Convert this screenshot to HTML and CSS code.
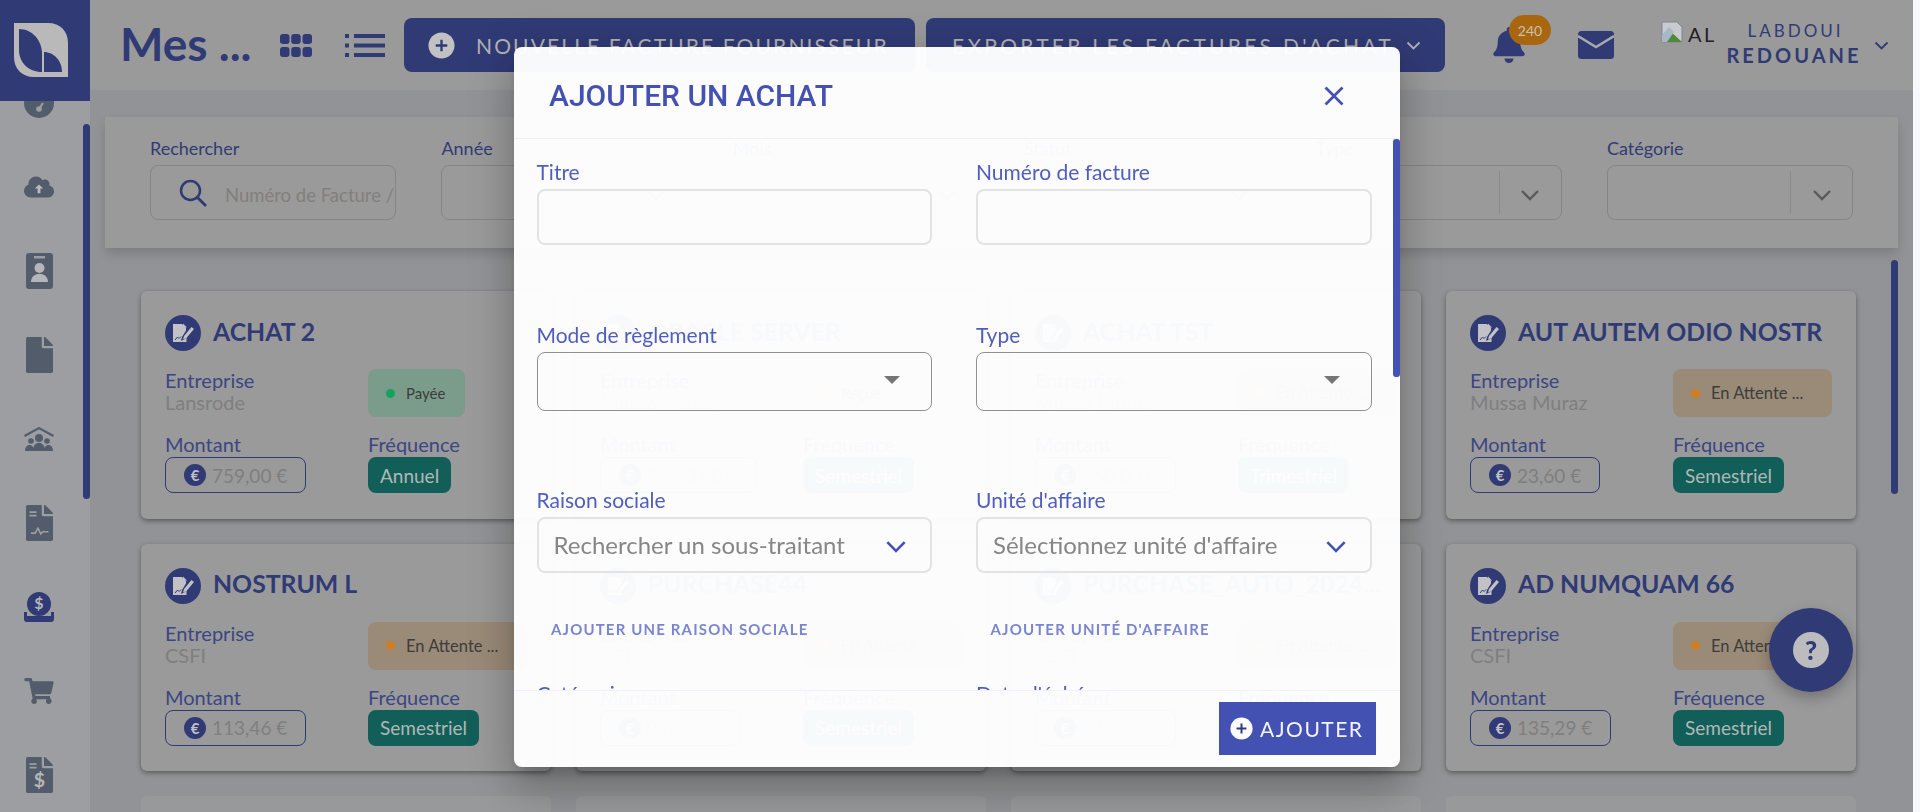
FILE: index.html
```html
<!DOCTYPE html>
<html lang="fr">
<head>
<meta charset="utf-8">
<title>Mes achats</title>
<link rel="stylesheet" href="styles.css">
</head>
<body>
<svg class="defs" width="0" height="0" aria-hidden="true">
  <symbol id="i-plus" viewBox="0 0 28 28"><circle cx="14" cy="14" r="13.5" fill="currentColor"/><path d="M14 8v12M8 14h12" class="plus-stroke" fill="none" stroke-width="2.4"/></symbol>
  <symbol id="i-doc" viewBox="0 0 36 36"><path d="M8 9h9l4 4v2.5l-4 6.5-1 4 4-2 1.500-2V27H8z" fill="#c2c2c6"/><path d="M18 8.500l4 4h-4z" fill="#c2c2c6"/><path d="M19 21l7.500-9 2.500 2-7.500 9-3.500 1.500z" fill="#c2c2c6"/><path d="M10 25l2.500-3 1.500 1.500 2-2" fill="none" stroke="#303a75" stroke-width="1"/></symbol>
  <symbol id="i-chev" viewBox="0 0 20 12"><path d="M2 2l8 8 8-8" fill="none" stroke="currentColor" stroke-width="2.400"/></symbol>
  <symbol id="i-file" viewBox="0 0 384 512"><path d="M224 136V0H24C10.700 0 0 10.700 0 24v464c0 13.300 10.700 24 24 24h336c13.300 0 24-10.700 24-24V160H248c-13.200 0-24-10.800-24-24zm160-14.100v6.100H256V0h6.100c6.400 0 12.500 2.500 17 7l97.900 98c4.500 4.500 7 10.600 7 16.900z" fill="currentColor"/></symbol>
</svg>

<div class="app">
  <aside class="sidebar">
    <div class="logo">
      <svg width="90" height="101" viewBox="0 0 90 101"><path d="M14 23H48C60 23 68 31 68 43V77H34C22 77 14 69 14 57Z" fill="#b9b9b9"/><path d="M19 29C32 29 42 40 42 54V72C28 72 19 62 19 50Z" fill="#303a75"/><path d="M44 52C54 52 62 61 62 72H44Z" fill="#303a75"/></svg>
    </div>
    <nav class="nav">
      <div class="nav-item"><svg width="30" height="30" viewBox="0 0 30 30"><circle cx="15" cy="15" r="15" fill="#525c6b"/><circle cx="15" cy="21" r="2.800" fill="#9d9ea1"/><path d="M15 21l4-6" stroke="#9d9ea1" stroke-width="2"/></svg></div>
      <div class="nav-item"><svg width="30" height="24" viewBox="0 0 640 512"><path d="M537.600 226.600c4.100-10.700 6.400-22.400 6.400-34.600 0-53-43-96-96-96-19.700 0-38.100 6-53.300 16.200C367 64.200 315.300 32 256 32c-88.400 0-160 71.600-160 160 0 2.700.1 5.400.2 8.100C40.200 219.800 0 273.200 0 336c0 79.500 64.500 144 144 144h368c70.700 0 128-57.300 128-128 0-61.900-44-113.600-102.400-125.400z" fill="#525c6b"/><path d="M320 200l-90 90h60v100h60V290h60z" fill="#b9bbbf"/></svg></div>
      <div class="nav-item"><svg width="27" height="36" viewBox="0 0 27 36"><rect width="27" height="36" rx="3" fill="#525c6b"/><rect x="8" y="3" width="11" height="2.500" fill="#9d9ea1"/><circle cx="13.500" cy="15" r="5" fill="#b5b6b9"/><path d="M5 29c0-11 17-11 17 0z" fill="#b5b6b9"/></svg></div>
      <div class="nav-item"><svg class="icon-side" width="27" height="36"><use href="#i-file"/></svg></div>
      <div class="nav-item"><svg width="30" height="24" viewBox="0 0 30 24"><path d="M0.500 9L15 1l14.500 8" fill="none" stroke="#525c6b" stroke-width="2"/><circle cx="15" cy="11" r="4" fill="#525c6b"/><circle cx="7" cy="14" r="2.800" fill="#525c6b"/><circle cx="23" cy="14" r="2.800" fill="#525c6b"/><path d="M9 24c0-11 12-11 12 0zM1 24c0-8 9-8 9 0zM20 24c0-8 9-8 9 0z" fill="#525c6b"/></svg></div>
      <div class="nav-item"><svg width="27" height="36" viewBox="0 0 384 512"><use href="#i-file" class="icon-side" width="384" height="512"/><path d="M50 100h100M50 150h100" stroke="#9d9ea1" stroke-width="24"/><path d="M70 400h60l40-70 40 80 30-30h80" fill="none" stroke="#9d9ea1" stroke-width="24"/></svg></div>
      <div class="nav-item"><svg width="30" height="30" viewBox="0 0 30 30"><circle cx="15" cy="12" r="12" fill="#303a75"/><path d="M0 20h3v4h24v-4h3v7a3 3 0 0 1-3 3H3a3 3 0 0 1-3-3z" fill="#303a75"/><rect x="2" y="24" width="26" height="3" fill="#303a75"/><text x="15" y="17" class="coin-glyph">$</text></svg></div>
      <div class="nav-item"><svg width="30" height="26" viewBox="0 0 576 512"><path d="M528.120 301.319l47.273-208C578.806 78.301 567.391 64 551.990 64H159.208l-9.166-44.810C147.758 8.021 137.930 0 126.529 0H24C10.745 0 0 10.745 0 24v16c0 13.255 10.745 24 24 24h69.883l70.248 343.435C147.325 417.100 136 435.222 136 456c0 30.928 25.072 56 56 56s56-25.072 56-56c0-15.674-6.447-29.835-16.824-40h209.647C430.447 426.165 424 440.326 424 456c0 30.928 25.072 56 56 56s56-25.072 56-56c0-22.172-12.888-41.332-31.579-50.405l5.517-24.276c3.413-15.018-8.002-29.319-23.403-29.319H218.117l-6.545-32h293.145c11.206 0 20.920-7.754 23.403-18.681z" fill="#525c6b"/></svg></div>
      <div class="nav-item"><svg width="27" height="36" viewBox="0 0 384 512"><use href="#i-file" class="icon-side" width="384" height="512"/><path d="M50 100h100M50 150h100" stroke="#9d9ea1" stroke-width="24"/><text x="192" y="430" class="file-glyph">$</text></svg></div>
    </nav>
    <div class="side-scroll"></div>
  </aside>

  <main class="main">
    <header class="topbar">
      <h1 class="page-title">Mes ...</h1>
      <svg class="view-grid" width="32" height="23" viewBox="0 0 32 23"><rect width="9.500" height="10" rx="3"/><rect x="11.200" width="9.500" height="10" rx="3"/><rect x="22.500" width="9.500" height="10" rx="3"/><rect y="13" width="9.500" height="10" rx="3"/><rect x="11.200" y="13" width="9.500" height="10" rx="3"/><rect x="22.500" y="13" width="9.500" height="10" rx="3"/></svg>
      <svg class="view-list" width="40" height="23" viewBox="0 0 40 23"><rect width="4" height="4"/><rect x="9" width="31" height="4"/><rect y="9.500" width="4" height="4"/><rect x="9" y="9.500" width="31" height="4"/><rect y="19" width="4" height="4"/><rect x="9" y="19" width="31" height="4"/></svg>
      <button class="btn-top btn-new"><svg class="plus" width="27" height="27"><use href="#i-plus"/></svg>NOUVELLE FACTURE FOURNISSEUR</button>
      <button class="btn-top btn-export">EXPORTER LES FACTURES D'ACHAT<svg class="btn-chev" width="15" height="9"><use href="#i-chev"/></svg></button>
      <div class="bell-wrap">
        <svg width="32" height="36" viewBox="0 0 448 512"><path d="M224 512c35.320 0 63.970-28.650 63.970-64H160.030c0 35.350 28.650 64 63.970 64zm215.390-149.710c-19.320-20.760-55.470-51.990-55.470-154.290 0-77.700-54.480-139.900-127.940-155.160V32c0-17.670-14.320-32-31.980-32s-31.980 14.330-31.980 32v20.840C118.560 68.100 64.080 130.300 64.080 208c0 102.300-36.150 133.530-55.470 154.290-6 6.450-8.660 14.160-8.610 21.710.11 16.400 12.980 32 32.100 32h383.800c19.120 0 32-15.600 32.100-32 .05-7.550-2.610-15.270-8.610-21.710z" fill="#303a75"/></svg>
        <span class="bell-badge">240</span>
      </div>
      <svg class="mail" width="36" height="28" viewBox="0 0 36 28"><rect width="36" height="28" rx="3.500" fill="#303a75"/><path d="M0 5l18 11L36 5" fill="none" stroke="#a9a9ad" stroke-width="2.500"/></svg>
      <div class="avatar">
        <svg width="24" height="22" viewBox="0 0 24 22"><path d="M1 1h15l5 5v15H1z" fill="#c8ccd0" stroke="#80868c"/><path d="M1 21V14l7-5 13 12z" fill="#4e8a3c"/><path d="M1 14l7-8 5 5-7 10H1z" fill="#a9b8c6"/></svg>
        <span class="avatar-alt">AL</span>
      </div>
      <div class="user">
        <span class="user-first">LABDOUI</span>
        <span class="user-last">REDOUANE</span>
      </div>
      <svg class="user-chev" width="15" height="9"><use href="#i-chev"/></svg>
    </header>

    <div class="content">
      <section class="filters">
        <div class="filter"><label class="filter-label">Rechercher</label>
          <div class="filter-box search-box"><svg width="28" height="28" viewBox="0 0 28 28"><circle cx="11.500" cy="11.500" r="9.500" fill="none" stroke="#303a75" stroke-width="2.500"/><path d="M18.500 18.500L27 27" stroke="#303a75" stroke-width="2.800"/></svg><span class="search-text">Numéro de Facture / Libellé</span></div></div>
        <div class="filter"><label class="filter-label">Année</label><div class="filter-box"><span class="box-arrow"><svg width="20" height="12"><use href="#i-chev"/></svg></span></div></div>
        <div class="filter"><label class="filter-label">Mois</label><div class="filter-box"><span class="box-arrow"><svg width="20" height="12"><use href="#i-chev"/></svg></span></div></div>
        <div class="filter"><label class="filter-label">Statut</label><div class="filter-box"><span class="box-arrow"><svg width="20" height="12"><use href="#i-chev"/></svg></span></div></div>
        <div class="filter"><label class="filter-label">Type</label><div class="filter-box"><span class="box-arrow"><svg width="20" height="12"><use href="#i-chev"/></svg></span></div></div>
        <div class="filter"><label class="filter-label">Catégorie</label><div class="filter-box"><span class="box-arrow"><svg width="20" height="12"><use href="#i-chev"/></svg></span></div></div>
      </section>

      <section class="cards">
        <article class="card"><div class="card-head"><svg class="card-icon" width="36" height="36"><use href="#i-doc"/></svg><h2 class="card-title">ACHAT 2</h2></div>
          <div class="card-grid"><div><div class="lab">Entreprise</div><div class="val">Lansrode</div></div><div><span class="badge badge-paid"><i class="dot dot-green"></i>Payée</span></div>
          <div class="cell-low"><div class="lab">Montant</div><span class="amount"><b class="euro">€</b>759,00 €</span></div><div class="cell-low"><div class="lab">Fréquence</div><span class="freq">Annuel</span></div></div></article>
        <article class="card"><div class="card-head"><svg class="card-icon" width="36" height="36"><use href="#i-doc"/></svg><h2 class="card-title">ORACLE SERVER</h2></div>
          <div class="card-grid"><div><div class="lab">Entreprise</div><div class="val">Mussa Muraz</div></div><div><span class="badge badge-paid"><i class="dot dot-wait"></i>Reçue</span></div>
          <div class="cell-low"><div class="lab">Montant</div><span class="amount"><b class="euro">€</b>7 490,00 €</span></div><div class="cell-low"><div class="lab">Fréquence</div><span class="freq">Semestriel</span></div></div></article>
        <article class="card"><div class="card-head"><svg class="card-icon" width="36" height="36"><use href="#i-doc"/></svg><h2 class="card-title">ACHAT TST</h2></div>
          <div class="card-grid"><div><div class="lab">Entreprise</div><div class="val">Mussa Muraz</div></div><div><span class="badge badge-wait"><i class="dot dot-wait"></i>En Attente ...</span></div>
          <div class="cell-low"><div class="lab">Montant</div><span class="amount"><b class="euro">€</b>360,00 €</span></div><div class="cell-low"><div class="lab">Fréquence</div><span class="freq">Trimestriel</span></div></div></article>
        <article class="card"><div class="card-head"><svg class="card-icon" width="36" height="36"><use href="#i-doc"/></svg><h2 class="card-title">AUT AUTEM ODIO NOSTR</h2></div>
          <div class="card-grid"><div><div class="lab">Entreprise</div><div class="val">Mussa Muraz</div></div><div><span class="badge badge-wait"><i class="dot dot-wait"></i>En Attente ...</span></div>
          <div class="cell-low"><div class="lab">Montant</div><span class="amount"><b class="euro">€</b>23,60 €</span></div><div class="cell-low"><div class="lab">Fréquence</div><span class="freq">Semestriel</span></div></div></article>

        <article class="card"><div class="card-head"><svg class="card-icon" width="36" height="36"><use href="#i-doc"/></svg><h2 class="card-title">NOSTRUM L</h2></div>
          <div class="card-grid"><div><div class="lab">Entreprise</div><div class="val">CSFI</div></div><div><span class="badge badge-wait"><i class="dot dot-wait"></i>En Attente ...</span></div>
          <div class="cell-low"><div class="lab">Montant</div><span class="amount"><b class="euro">€</b>113,46 €</span></div><div class="cell-low"><div class="lab">Fréquence</div><span class="freq">Semestriel</span></div></div></article>
        <article class="card"><div class="card-head"><svg class="card-icon" width="36" height="36"><use href="#i-doc"/></svg><h2 class="card-title">PURCHASE44</h2></div>
          <div class="card-grid"><div><div class="lab">Entreprise</div><div class="val">CSFI</div></div><div><span class="badge badge-wait"><i class="dot dot-wait"></i>En Attente ...</span></div>
          <div class="cell-low"><div class="lab">Montant</div><span class="amount"><b class="euro">€</b>928,00 €</span></div><div class="cell-low"><div class="lab">Fréquence</div><span class="freq">Semestriel</span></div></div></article>
        <article class="card"><div class="card-head"><svg class="card-icon" width="36" height="36"><use href="#i-doc"/></svg><h2 class="card-title">PURCHASE_AUTO_2024...</h2></div>
          <div class="card-grid"><div><div class="lab">Entreprise</div><div class="val">CSFI</div></div><div><span class="badge badge-wait"><i class="dot dot-wait"></i>En Attente ...</span></div>
          <div class="cell-low"><div class="lab">Montant</div><span class="amount"><b class="euro">€</b>840,00 €</span></div><div class="cell-low"><div class="lab">Fréquence</div><span class="freq">Semestriel</span></div></div></article>
        <article class="card"><div class="card-head"><svg class="card-icon" width="36" height="36"><use href="#i-doc"/></svg><h2 class="card-title">AD NUMQUAM 66</h2></div>
          <div class="card-grid"><div><div class="lab">Entreprise</div><div class="val">CSFI</div></div><div><span class="badge badge-wait"><i class="dot dot-wait"></i>En Attente ...</span></div>
          <div class="cell-low"><div class="lab">Montant</div><span class="amount"><b class="euro">€</b>135,29 €</span></div><div class="cell-low"><div class="lab">Fréquence</div><span class="freq">Semestriel</span></div></div></article>

        <article class="card card-next"></article><article class="card card-next"></article><article class="card card-next"></article><article class="card card-next"></article>
      </section>
      <div class="content-scroll"></div>
    </div>
  </main>
  <div class="strip"></div>
</div>

<button class="fab"><span class="fab-inner">?</span></button>

<div class="modal">
  <div class="modal-head">
    <h2 class="modal-title">AJOUTER UN ACHAT</h2>
    <svg class="modal-close" width="20" height="20" viewBox="0 0 20 20"><path d="M1.500 1.500l17 17M18.500 1.500l-17 17" fill="none" stroke="#4351b3" stroke-width="2.700"/></svg>
  </div>
  <div class="modal-body">
    <div class="form">
      <div class="field"><label class="f-label">Titre</label><div class="f-input"></div></div>
      <div class="field"><label class="f-label">Numéro de facture</label><div class="f-input"></div></div>
      <div class="field field-2"><label class="f-label">Mode de règlement</label><div class="f-select"><i class="caret"></i></div></div>
      <div class="field field-2"><label class="f-label">Type</label><div class="f-select"><i class="caret"></i></div></div>
      <div class="field field-3"><label class="f-label">Raison sociale</label><div class="f-input f-combo"><span class="f-ph">Rechercher un sous-traitant</span><svg class="f-chev" width="22" height="13"><use href="#i-chev"/></svg></div><a class="f-link">AJOUTER UNE RAISON SOCIALE</a></div>
      <div class="field field-3"><label class="f-label">Unité d'affaire</label><div class="f-input f-combo"><span class="f-ph">Sélectionnez unité d'affaire</span><svg class="f-chev" width="22" height="13"><use href="#i-chev"/></svg></div><a class="f-link">AJOUTER UNITÉ D'AFFAIRE</a></div>
      <div class="field"><label class="f-label">Catégorie</label><div class="f-input"></div></div>
      <div class="field"><label class="f-label">Date d'échéance</label><div class="f-input"></div></div>
    </div>
    <div class="modal-scroll"></div>
  </div>
  <div class="modal-foot">
    <button class="btn-add"><svg class="plus-add" width="23" height="23"><use href="#i-plus"/></svg>AJOUTER</button>
  </div>
</div>
</body>
</html>
```

FILE: styles.css
```css
* { box-sizing: border-box; }
html, body { margin: 0; height: 100%; overflow: hidden; }
body { font-family: "Lato", "Noto Sans", sans-serif; background: #f7f8fc; }
.defs { position: absolute; }
h1, h2 { margin: 0; }
button { font-family: inherit; border: 0; cursor: pointer; }

.app { display: flex; width: 1920px; height: 812px; }

/* sidebar */
.sidebar { position: relative; width: 90px; flex: none; background: #9d9ea1; display: flex; flex-direction: column; height: 812px; overflow: hidden; }
.logo { position: relative; z-index: 1; height: 101px; flex: none; background: #303a75; }
.logo svg { display: block; }
.nav { margin-top: -40px; padding-right: 12px; }
.nav-item { height: 84px; display: flex; align-items: center; justify-content: center; }
.icon-side { color: #525c6b; }
.coin-glyph { font: 700 16px "Lato", sans-serif; fill: #b5b6b9; text-anchor: middle; }
.file-glyph { font: 700 280px "Lato", sans-serif; fill: #b5b6b9; text-anchor: middle; }
.side-scroll { position: absolute; left: 83px; top: 124px; width: 7px; height: 375px; border-radius: 4px; background: #303a75; }

/* main */
.main { width: 1823px; flex: none; height: 812px; display: flex; flex-direction: column; background: #929396; overflow: hidden; }
.strip { flex: 1; background: #f7f8fc; }

.topbar { height: 90px; flex: none; background: #9a9a9a; display: flex; align-items: center; padding-left: 30px; color: #303a75; }
.page-title { width: 132px; font-size: 46px; font-weight: 700; line-height: 1; margin-top: -3px; color: #303a75; white-space: nowrap; }
.view-grid { margin-left: 28px; fill: #303a75; flex: none; }
.view-list { margin-left: 33px; fill: #303a75; flex: none; }
.btn-top { height: 54px; border-radius: 8px; background: #303a75; color: #b2b2b5; font-size: 21px; letter-spacing: 2.120px; display: flex; align-items: center; white-space: nowrap; flex: none; padding: 0; }
.btn-new { margin-left: 19px; width: 511px; padding-left: 24px; }
.plus { margin-right: 21px; color: #c2c2c4; }
.plus-stroke { stroke: #303a75; }
.btn-export { margin-left: 11px; width: 519px; padding-left: 26px; letter-spacing: 3.270px; }
.btn-chev { margin-left: 12px; color: #b2b2b5; }
.bell-wrap { position: relative; margin-left: 48px; width: 32px; height: 36px; flex: none; }
.bell-wrap svg { display: block; }
.bell-badge { position: absolute; left: 16px; top: -12px; width: 42px; height: 30px; border-radius: 15px; background: #a8670f; color: #c9c0b0; font-size: 14px; display: flex; align-items: center; justify-content: center; }
.mail { margin-left: 53px; flex: none; }
.avatar { margin-left: 47px; width: 67px; flex: none; align-self: flex-start; margin-top: 21px; display: flex; gap: 3px; align-items: flex-start; }
.avatar-alt { color: #222; font-size: 20px; letter-spacing: 2.500px; line-height: 20px; margin-top: 3px; }
.user { width: 132px; flex: none; display: flex; flex-direction: column; align-items: center; color: #303a75; }
.user-first { font-size: 17px; letter-spacing: 3px; line-height: 23px; margin-left: 3px; margin-top: -2px; }
.user-last { font-size: 20px; font-weight: 700; letter-spacing: 3px; line-height: 27px; white-space: nowrap; }
.user-chev { margin-left: 14px; flex: none; color: #303a75; }

/* content */
.content { position: relative; flex: 1; padding: 27px 15px 0; overflow: hidden; }
.filters { height: 131px; background: #9a9a9a; box-shadow: 0 6px 10px rgba(0,0,0,.14); padding: 18px 45px 0; display: grid; grid-template-columns: repeat(6, 1fr); column-gap: 45.400px; }
.filter { min-width: 0; }
.filter-label { display: block; font-size: 18px; line-height: 26px; margin-bottom: 4px; color: #303a75; }
.filter-box { height: 55px; border: 1px solid #868686; border-radius: 8px; display: flex; justify-content: flex-end; align-items: center; overflow: hidden; }
.box-arrow { width: 62px; height: 43px; border-left: 1px solid #8a8a8a; display: flex; align-items: center; justify-content: center; color: #5a5a5a; padding-top: 5px; }
.search-box { justify-content: flex-start; padding-left: 28px; gap: 18px; }
.search-box svg { flex: none; }
.search-text { font-size: 18.500px; color: #827f7c; white-space: nowrap; margin-top: 4px; }

.cards { margin-top: 43px; padding-left: 36px; display: grid; grid-template-columns: repeat(4, 410px); grid-auto-rows: 227.500px; gap: 25px; }
.card { background: #9a9a9a; border-radius: 6px; box-shadow: 0 2px 5px rgba(0,0,0,.38); padding: 24px; min-width: 0; }
.card-next { box-shadow: none; background: #98999b; }
.card-head { display: flex; align-items: center; gap: 12px; height: 36px; }
.card-icon { flex: none; background: #303a75; border-radius: 50%; }
.card-title { font-size: 24.800px; font-weight: 700; color: #303a75; white-space: nowrap; margin-top: -4px; }
.card-grid { margin-top: 18px; display: grid; grid-template-columns: 203px 1fr; }
.lab { font-size: 20px; line-height: 22px; color: #3c4683; }
.val { font-size: 20px; line-height: 22px; color: #7f7f7f; }
.badge { height: 48px; border-radius: 8px; display: flex; align-items: center; font-size: 15px; color: #3c3c3c; padding-left: 18px; white-space: nowrap; }
.badge-paid { width: 97px; background: #7b9c8a; }
.badge-wait { width: 159px; background: #9a8a78; font-size: 16.500px; }
.dot { width: 9px; height: 9px; border-radius: 50%; margin-right: 11px; flex: none; }
.dot-green { background: #13a35a; }
.dot-wait { background: #ce7f24; }
.cell-low { margin-top: 16px; }
.lab + .amount, .lab + .freq { margin-top: 2px; }
.amount { display: inline-flex; align-items: center; height: 36px; border: 1px solid #303a75; border-radius: 8px; padding: 0 18px 0 18px; font-size: 19px; color: #7f7f7f; white-space: nowrap; }
.euro { width: 22px; height: 22px; border-radius: 50%; background: #303a75; color: #c2c2c6; font-size: 15px; margin-right: 6px; display: flex; align-items: center; justify-content: center; }
.freq { display: inline-flex; align-items: center; height: 36px; padding: 0 12px; border-radius: 8px; background: #125f59; color: #b0b8b6; font-size: 19px; white-space: nowrap; }
.content-scroll { position: absolute; right: 15px; top: 170px; width: 7px; height: 234px; border-radius: 4px; background: #303a75; }

/* FAB */
.fab { position: fixed; left: 1769px; top: 608px; width: 84px; height: 84px; padding: 0; border-radius: 50%; background: #303a75; box-shadow: 0 6px 14px rgba(0,0,0,.25); display: flex; align-items: center; justify-content: center; }
.fab-inner { width: 36px; height: 36px; border-radius: 50%; background: #bcbcbf; color: #303a75; font-size: 26px; font-weight: 900; line-height: 36px; text-align: center; }

/* modal */
.modal { position: fixed; left: 514px; top: 46.500px; width: 886px; height: 720px; display: flex; flex-direction: column; border-radius: 8px; overflow: hidden; background: rgba(255,255,255,.97); box-shadow: 0 11px 15px -7px rgba(0,0,0,.2), 0 24px 38px 3px rgba(0,0,0,.14), 0 9px 46px 8px rgba(0,0,0,.12); }
.modal-head { height: 92px; flex: none; display: flex; align-items: center; justify-content: space-between; padding: 7px 56px 0 35px; border-bottom: 1px solid #eff0fb; }
.modal-title { font-family: "Roboto", sans-serif; font-weight: 500; font-size: 30px; color: #4351b3; white-space: nowrap; }
.modal-body { position: relative; flex: 1; min-height: 0; overflow: hidden; padding: 21px 0 0 22.500px; }
.form { width: 835px; display: grid; grid-template-columns: 395.500px 395.500px; column-gap: 44px; align-content: start; }
.field { margin-bottom: 78px; min-width: 0; }
.field-2 { margin-bottom: 77px; }
.field-3 { margin-bottom: 43px; }
.f-label { display: block; font-size: 21px; line-height: 24px; margin-bottom: 5px; color: #4f5ebd; }
.f-input { height: 56px; border: 2px solid #e3e3e3; border-radius: 8px; }
.f-select { height: 59px; border: 1px solid #909090; border-radius: 8px; display: flex; align-items: center; justify-content: flex-end; padding-right: 31px; }
.caret { width: 0; height: 0; border-left: 8px solid transparent; border-right: 8px solid transparent; border-top: 8px solid #757575; margin-top: -2px; }
.f-combo { display: flex; align-items: center; justify-content: space-between; padding: 0 23px 0 15px; }
.f-ph { font-size: 24px; color: #868686; white-space: nowrap; }
.f-chev { color: #4351b3; margin-top: 3px; }
.f-link { display: block; margin: 46px 0 0 14.500px; height: 20px; font-size: 15px; font-weight: 700; line-height: 20px; letter-spacing: 1.150px; color: #7a86cf; white-space: nowrap; }
.modal-scroll { position: absolute; right: 0; top: 0; width: 7px; height: 238px; border-radius: 3px; background: #4351b3; }
.modal-foot { height: 77px; flex: none; border-top: 1px solid #f0f1fb; display: flex; align-items: center; justify-content: flex-end; padding-right: 24px; }
.btn-add { width: 157px; height: 53px; background: #4351b3; color: #f3f4fb; font-size: 21px; letter-spacing: 1.500px; display: flex; align-items: center; padding: 0 0 0 11px; }
.plus-add { margin-right: 7px; color: #fdfdfd; }
.btn-add .plus-stroke { stroke: #4351b3; }
```
